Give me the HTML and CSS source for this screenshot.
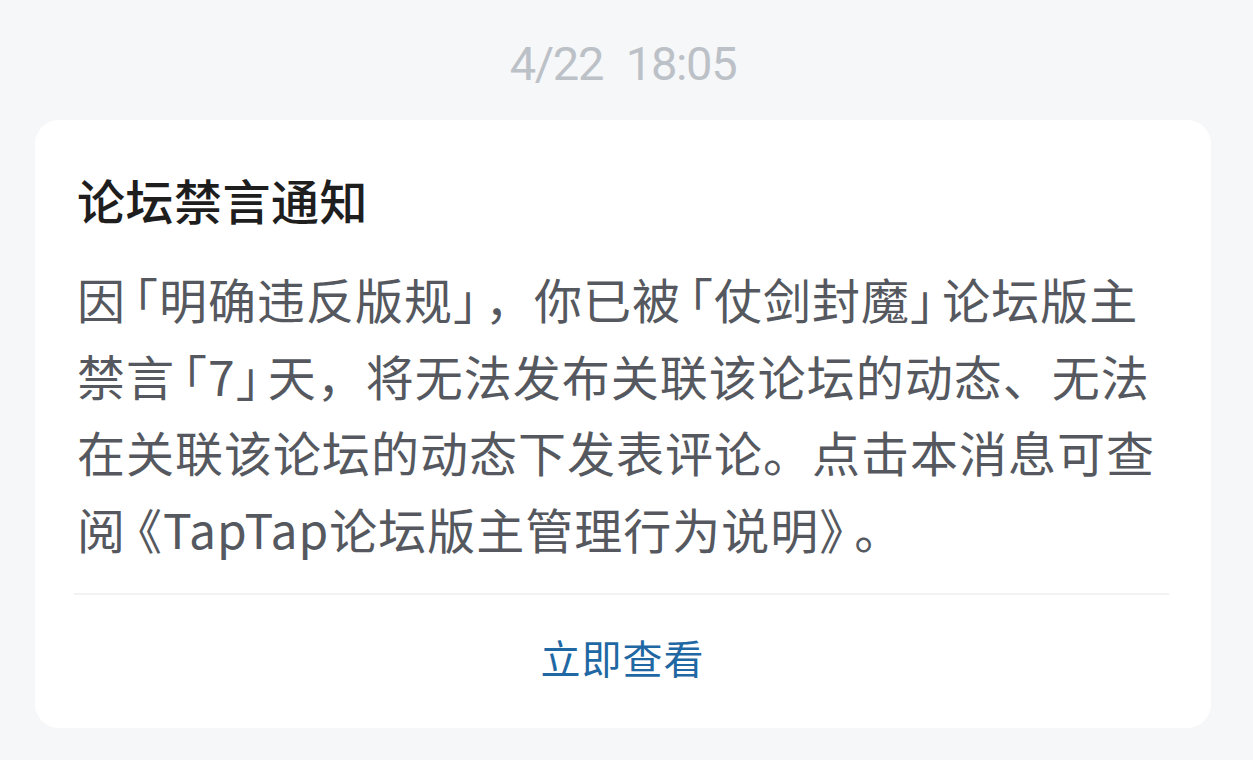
FILE: index.html
```html
<!DOCTYPE html>
<html lang="zh-CN">
<head>
<meta charset="utf-8">
<title>论坛禁言通知</title>
<link rel="stylesheet" href="styles.css">
</head>
<body>
<div class="page">
  <div class="time">4/22&nbsp;&nbsp;18:05</div>
  <div class="card">
    <h2 class="title">论坛禁言通知</h2>
    <p class="content">因<span class="pn op">「</span>明确违反版规<span class="pn cl">」</span>，你已被<span class="pn op">「</span>仗剑封魔<span class="pn cl">」</span>论坛版主<br>禁言<span class="pn op">「</span>7<span class="pn cl">」</span>天，将无法发布关联该论坛的动态、无法<br>在关联该论坛的动态下发表评论。点击本消息可查<br>阅<span class="pn op wide">《</span>TapTap论坛版主管理行为说明<span class="pn cl wide">》</span>。</p>
    <div class="divider"></div>
    <div class="action">立即查看</div>
  </div>
</div>
</body>
</html>
```

FILE: styles.css
```css
html, body {
  margin: 0;
  padding: 0;
  background: #f6f7f9;
}
body {
  font-family: "Noto Sans CJK SC", "Noto Sans", sans-serif;
  width: 1253px;
  height: 760px;
  overflow: hidden;
}
.page {
  display: flex;
  flex-direction: column;
}
.time {
  height: 120px;
  box-sizing: border-box;
  padding: 36px 42px 0 35px;
  text-align: center;
  font-family: Roboto, "Noto Sans", sans-serif;
  font-size: 47px;
  line-height: 56px;
  letter-spacing: -1.3px;
  word-spacing: 1px;
  color: #bcc1c7;
}
.card {
  margin: 0 42px 0 35px;
  background: #ffffff;
  border-radius: 24px;
  padding: 49px 43px 0 42px;
}
.title {
  margin: 0;
  font-size: 48px;
  line-height: 60px;
  font-weight: 500;
  color: #1e1e1e;
  letter-spacing: 0.5px;
}
.content {
  margin: 31px 0 0;
  font-size: 48px;
  line-height: 76.5px;
  color: #55595f;
  letter-spacing: 1px;
  white-space: nowrap;
}
.pn {
  font-feature-settings: "halt" 1;
}
.op {
  margin-left: 8px;
}
.cl {
  margin-right: 7px;
}
.wide.op {
  margin-left: 12px;
}
.wide.cl {
  margin-right: 10px;
}
.divider {
  margin: 27px -1px 0 -3px;
  height: 2px;
  background: #f1f2f4;
}
.action {
  height: 133px;
  box-sizing: border-box;
  padding-bottom: 9px;
  display: flex;
  align-items: center;
  justify-content: center;
  font-size: 40px;
  color: #1f68a3;
  letter-spacing: 1px;
}
```
